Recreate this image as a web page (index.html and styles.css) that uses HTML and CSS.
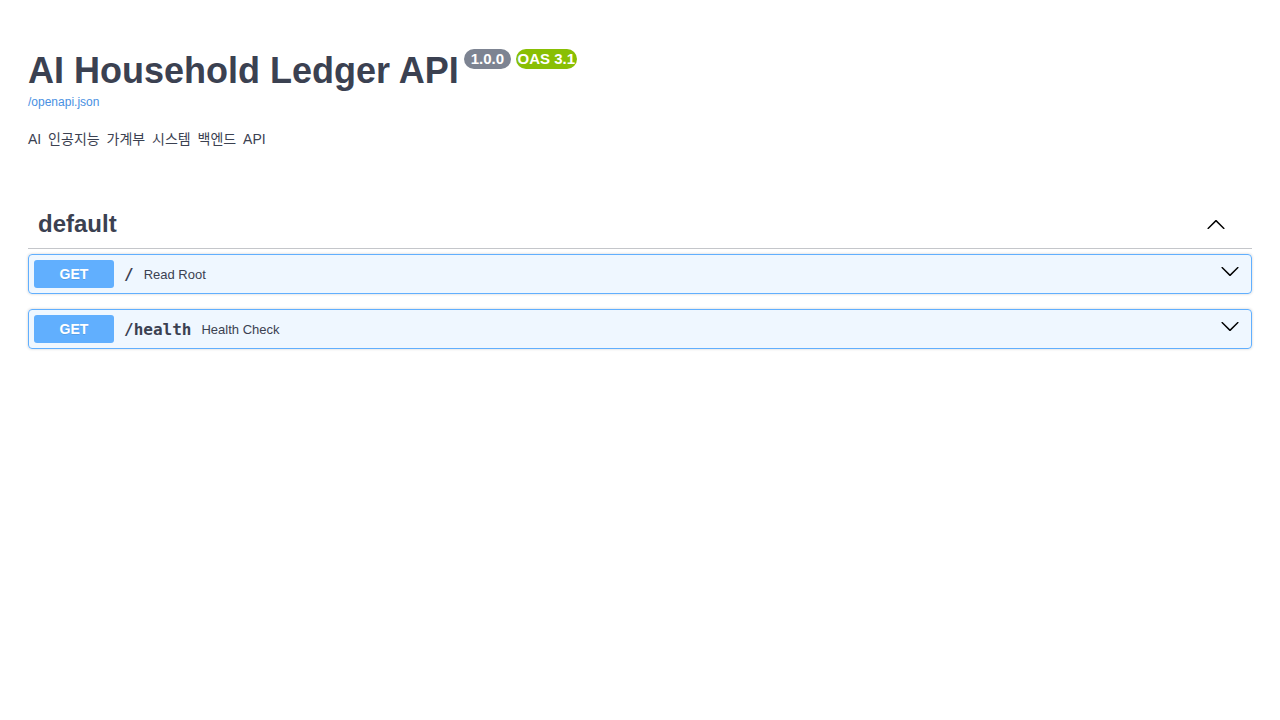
FILE: index.html
```html
<!DOCTYPE html>
<html lang="en">
<head>
<meta charset="utf-8">
<title>AI Household Ledger API - Swagger UI</title>
<link rel="stylesheet" href="styles.css">
</head>
<body>
<div class="swagger-ui">
  <div class="wrapper">
    <section class="info">
      <hgroup class="main">
        <h2 class="title">AI Household Ledger API<span class="badge version">1.0.0</span><span class="badge stamp">OAS 3.1</span></h2>
        <a class="link" href="#">/openapi.json</a>
      </hgroup>
      <div class="description"><p lang="ko">AI 인공지능 가계부 시스템 백엔드 API</p></div>
    </section>

    <section class="tag-section">
      <h3 class="opblock-tag">
        <span class="tag-name">default</span>
        <span class="spacer"></span>
        <button class="expand" aria-label="collapse">
          <svg width="20" height="20" viewBox="0 0 20 20"><path d="M17.418 14.908c.272.268.709.268.979 0s.271-.701 0-.969l-7.908-7.83c-.27-.268-.707-.268-.979 0l-7.908 7.83c-.27.268-.27.701 0 .969.271.268.709.268.979 0L10 7.767l7.418 7.141z"/></svg>
        </button>
      </h3>
      <div class="opblock">
        <div class="summary">
          <span class="method">GET</span>
          <span class="path">/</span>
          <span class="desc">Read Root</span>
          <span class="spacer"></span>
          <button class="expand" aria-label="expand">
            <svg width="20" height="20" viewBox="0 0 20 20"><path d="M17.418 6.109c.272-.268.709-.268.979 0s.271.701 0 .969l-7.908 7.83c-.27.268-.707.268-.979 0l-7.908-7.830c-.27-.268-.27-.701 0-.969.271-.268.709-.268.979 0L10 13.25l7.418-7.141z"/></svg>
          </button>
        </div>
      </div>
      <div class="opblock">
        <div class="summary">
          <span class="method">GET</span>
          <span class="path">/health</span>
          <span class="desc">Health Check</span>
          <span class="spacer"></span>
          <button class="expand" aria-label="expand">
            <svg width="20" height="20" viewBox="0 0 20 20"><path d="M17.418 6.109c.272-.268.709-.268.979 0s.271.701 0 .969l-7.908 7.83c-.27.268-.707.268-.979 0l-7.908-7.830c-.27-.268-.27-.701 0-.969.271-.268.709-.268.979 0L10 13.25l7.418-7.141z"/></svg>
          </button>
        </div>
      </div>
    </section>
  </div>
</div>
</body>
</html>
```

FILE: styles.css
```css
html, body {
  background: #fff;
}
body {
  margin: 8px;
  font-family: "Liberation Sans", Arial, "Noto Sans CJK KR", sans-serif;
  color: #3b4151;
}
.wrapper {
  padding: 0 20px;
}
.info {
  margin: 42px 0 50px;
}
.main {
  margin: 0 0 20px;
}
.title {
  margin: 0;
  font-size: 36px;
  font-weight: bold;
  color: #3b4151;
  line-height: 41px;
}
.badge {
  display: inline-block;
  position: relative;
  top: -19px;
  vertical-align: baseline;
  font-size: 15px;
  line-height: 20px;
  height: 20px;
  color: #fff;
  border-radius: 57px;
  font-weight: bold;
}
.version {
  background: #7d8492;
  margin-left: 5px;
  padding: 0 7px;
}
.stamp {
  background: #89bf04;
  margin-left: 5px;
  padding: 0 1.5px;
}
.link {
  display: block;
  font-size: 12px;
  line-height: 14px;
  color: #4990e2;
  text-decoration: none;
  margin-top: 4px;
}
.description {
  margin-top: 20px;
}
.description p {
  margin: 0;
  font-family: "Liberation Sans", "Noto Sans CJK KR", sans-serif;
  font-size: 14px;
  line-height: 20px;
  word-spacing: 3px;
  color: #3b4151;
}
.opblock-tag {
  display: flex;
  align-items: center;
  margin: 0 0 5px;
  padding: 10px 20px 10px 10px;
  border-bottom: 1px solid rgba(59, 65, 81, 0.3);
  font-size: 24px;
  font-weight: bold;
  color: #3b4151;
  height: 29px;
}
.spacer {
  flex: 1;
}
.expand {
  background: none;
  border: none;
  padding: 0;
  margin: 0 6px 0 0;
  width: 20px;
  height: 20px;
  display: flex;
  cursor: pointer;
}
.expand svg {
  fill: #000;
}
.opblock {
  margin: 0 0 15px;
  border: 1px solid #61affe;
  border-radius: 4px;
  background: rgba(97, 175, 254, 0.1);
  box-shadow: 0 0 3px rgba(0, 0, 0, 0.19);
}
.summary {
  display: flex;
  align-items: center;
  padding: 5px;
  height: 28px;
}
.method {
  background: #61affe;
  border-radius: 3px;
  color: #fff;
  font-size: 14px;
  font-weight: bold;
  min-width: 80px;
  line-height: 16px;
  padding: 6px 0;
  text-align: center;
  text-shadow: 0 1px 0 rgba(0, 0, 0, 0.1);
}
.path {
  font-family: "DejaVu Sans Mono", monospace;
  font-size: 16px;
  font-weight: 600;
  color: #3b4151;
  padding: 0 10px;
}
.desc {
  font-size: 13px;
  color: #3b4151;
}
.summary .expand {
  margin-top: -7px;
}
```
